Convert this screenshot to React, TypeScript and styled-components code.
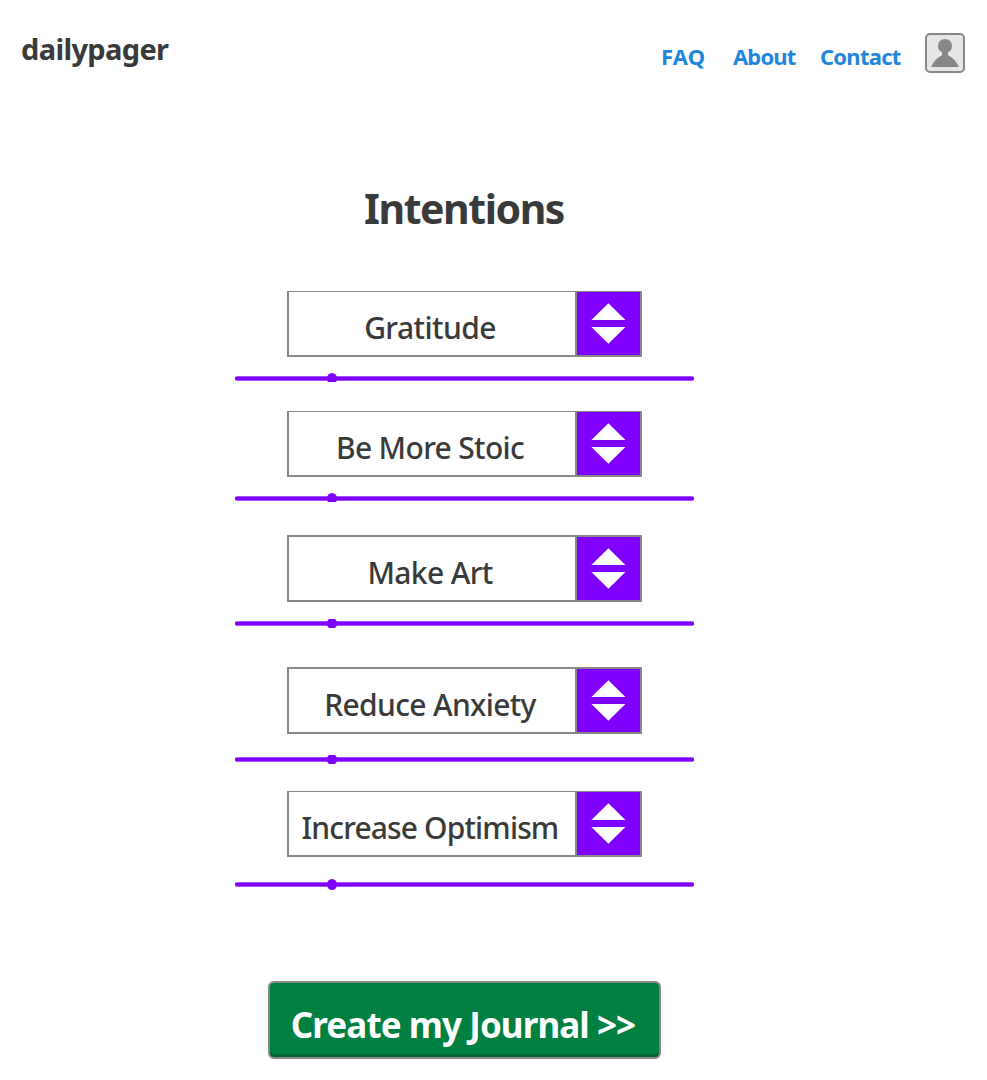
import React from 'react';
import styled, { createGlobalStyle } from 'styled-components';

const ink = '#3a3a3a';
const grey = '#888888';
const purple = '#7f00ff';

const GlobalStyle = createGlobalStyle`
  * { box-sizing: border-box; }
  body {
    margin: 0;
    background: #ffffff;
    color: ${ink};
    font-family: "Noto Sans", sans-serif;
  }
`;

const Page = styled.div`
  width: 987px;
  height: 1080px;
  overflow: hidden;
`;

const Header = styled.header`
  display: flex;
  justify-content: space-between;
  align-items: flex-start;
  padding: 33px 22px 0 21px;
`;

const Logo = styled.div`
  padding-top: 1px;
  font-size: 29px;
  font-weight: 700;
  line-height: 30px;
  letter-spacing: -0.65px;
`;

const Nav = styled.nav`
  display: grid;
  grid-template-columns: 72px 87px 105px 40px;
  height: 40px;
`;

const NavLink = styled.a<{ $tracking: number }>`
  margin-top: 11px;
  color: #1f86dc;
  font-size: 22px;
  font-weight: 700;
  line-height: 24px;
  letter-spacing: ${(p) => p.$tracking}px;
  text-decoration: none;
`;

const Avatar = styled.button`
  display: flex;
  width: 40px;
  height: 40px;
  padding: 0;
  border: 2px solid ${grey};
  border-radius: 5px;
  background: #e6e6e6;
`;

const Main = styled.main`
  display: flex;
  flex-direction: column;
  align-items: center;
  width: 459px;
  margin: 109px 0 0 235px;
`;

const Title = styled.h1`
  margin: 0 0 58px;
  padding: 1px 1px 0 0;
  font-size: 41px;
  font-weight: 700;
  line-height: 50px;
  letter-spacing: -1.45px;
`;

const Intention = styled.section<{ $after: number }>`
  display: flex;
  flex-direction: column;
  align-items: center;
  width: 100%;
  margin-bottom: ${(p) => p.$after}px;
`;

const Select = styled.div<{ $topBorder: number }>`
  display: flex;
  width: 355px;
  border: 2px solid ${grey};
  border-top-width: ${(p) => p.$topBorder}px;
`;

const SelectLabel = styled.div<{ $tracking: number }>`
  display: flex;
  flex: 1;
  align-items: center;
  justify-content: center;
  height: 63px;
  padding: 8px 4px 0 0;
  font-size: 30px;
  font-weight: 500;
  line-height: 40px;
  letter-spacing: ${(p) => p.$tracking}px;
  white-space: nowrap;
`;

const Stepper = styled.button`
  display: flex;
  width: 65px;
  height: 63px;
  padding: 0;
  border: 0;
  border-left: 2px solid ${grey};
  background: ${purple};
`;

const Track = styled.div<{ $before: number }>`
  position: relative;
  width: 459px;
  height: 5px;
  margin-top: ${(p) => p.$before}px;
  border-radius: 2px;
  background: linear-gradient(#a550ff 0 1px, ${purple} 1px 4px, #a550ff 4px);
`;

const Thumb = styled.div<{ $top: number; $bottom: number }>`
  position: absolute;
  left: 91.5px;
  top: -3px;
  width: 10.5px;
  height: 11px;
  border-radius: 50%;
  background: ${purple};
  clip-path: inset(${(p) => p.$top}px 0 ${(p) => p.$bottom}px 0);
`;

const CreateButton = styled.button`
  display: flex;
  justify-content: center;
  width: 393px;
  height: 78px;
  padding: 22px 3px 0 0;
  border: 2px solid ${grey};
  border-radius: 6px;
  background: #008040;
  box-shadow: inset 0 -3px 0 #006633;
  color: #ffffff;
  font-family: inherit;
  font-size: 35px;
  font-weight: 700;
  line-height: 40px;
  letter-spacing: -0.92px;
  white-space: nowrap;
`;

const links = [
  { label: 'FAQ', tracking: 0.2 },
  { label: 'About', tracking: -0.85 },
  { label: 'Contact', tracking: -0.75 },
];

const intentions = [
  { label: 'Gratitude', tracking: -0.56, border: 1, before: 19, after: 30, top: 0, bottom: 2 },
  { label: 'Be More Stoic', tracking: -0.67, border: 1, before: 19, after: 34, top: 0, bottom: 2 },
  { label: 'Make Art', tracking: -0.65, border: 2, before: 19, after: 41, top: 1, bottom: 1 },
  { label: 'Reduce Anxiety', tracking: -0.65, border: 2, before: 23, after: 29, top: 1, bottom: 1 },
  { label: 'Increase Optimism', tracking: -0.86, border: 1, before: 25, after: 94, top: 0, bottom: 0 },
];

const PersonIcon = () => (
  <svg width="36" height="36" viewBox="0 0 36 36" fill={grey}>
    <circle cx="18" cy="11" r="7.1" />
    <path d="M15 15.500h6v4c0 .8.500 1.200 1.300 1.600C26.200 23 29.300 27 32 32H4c2.700-5 5.800-9 9.700-10.900.8-.4 1.300-.8 1.300-1.600z" />
  </svg>
);

const ArrowsIcon = () => (
  <svg width="63" height="63" viewBox="0 0 63 63" fill="#ffffff">
    <path d="M31.400 11.200 48.400 28H14.400z" />
    <path d="M14.400 35H48.400L31.400 51.800z" />
  </svg>
);

export default function App() {
  return (
    <Page>
      <GlobalStyle />
      <Header>
        <Logo>dailypager</Logo>
        <Nav>
          {links.map((link) => (
            <NavLink key={link.label} $tracking={link.tracking}>
              {link.label}
            </NavLink>
          ))}
          <Avatar aria-label="Profile">
            <PersonIcon />
          </Avatar>
        </Nav>
      </Header>
      <Main>
        <Title>Intentions</Title>
        {intentions.map((item) => (
          <Intention key={item.label} $after={item.after}>
            <Select $topBorder={item.border}>
              <SelectLabel $tracking={item.tracking}>{item.label}</SelectLabel>
              <Stepper aria-label={item.label}>
                <ArrowsIcon />
              </Stepper>
            </Select>
            <Track $before={item.before}>
              <Thumb $top={item.top} $bottom={item.bottom} />
            </Track>
          </Intention>
        ))}
        <CreateButton>Create my Journal &gt;&gt;</CreateButton>
      </Main>
    </Page>
  );
}
